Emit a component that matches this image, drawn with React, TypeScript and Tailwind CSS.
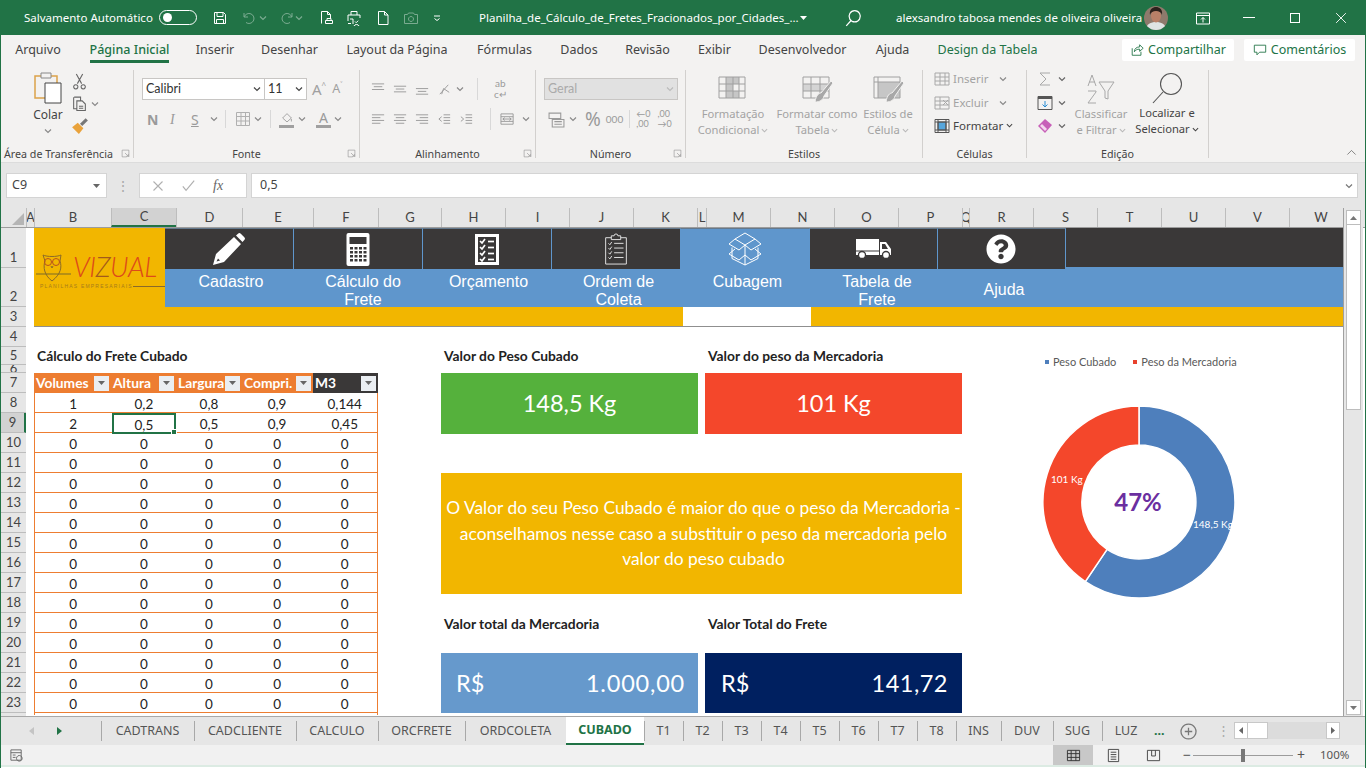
import { ReactNode } from "react";
import { FaQuestionCircle } from "react-icons/fa";

const ui = "font-['Noto_Sans',sans-serif]";
const cell = "font-['Lato',sans-serif]";
const off = "#a8a8a8";

const Chev = ({ color = "#8a8a8a", s = 8 }: { color?: string; s?: number }) => (
  <svg width={s} height={s} viewBox="0 0 8 8" fill="none" stroke={color} strokeWidth="1.2">
    <path d="M1 2.5 4 5.5 7 2.5" />
  </svg>
);

// generic 16px stroke icon for the ribbon
const Ico = ({ d, c = off, s = 16, w = 1 }: { d: string; c?: string; s?: number; w?: number }) => (
  <svg width={s} height={s} viewBox="0 0 16 16" fill="none" stroke={c} strokeWidth={w}>
    <path d={d} />
  </svg>
);

const TitleBar = () => (
  <div className={`${ui} flex items-center h-[35px] bg-[#217346] text-white text-[11.5px] whitespace-nowrap`}>
    <span className="ml-[24px] w-[135px]">Salvamento Automático</span>
    <div className="w-[38px] h-[15px] rounded-full border border-white flex items-center px-[3px]">
      <div className="w-[9px] h-[9px] rounded-full bg-white" />
    </div>
    <div className="ml-[15px] w-[20px]"><Ico c="#fff" d="M2.5 2.5h9l2 2v9h-11zM5 2.5v4h6v-4M4.5 13.5v-4h7v4" /></div>
    <div className="ml-[9px] w-[16px] opacity-40"><Ico c="#fff" d="M3 3v4h4M3.2 7A5 5 0 1 1 5 12.5" /></div>
    <div className="ml-[2px] w-[8px] opacity-40"><Chev color="#fff" /></div>
    <div className="ml-[12px] w-[16px] opacity-40"><Ico c="#fff" d="M13 3v4H9M12.8 7A5 5 0 1 0 11 12.5" /></div>
    <div className="ml-[0px] w-[8px] opacity-40"><Chev color="#fff" /></div>
    <div className="ml-[15px] w-[16px]"><Ico c="#fff" d="M3.5 13.5v-12h6l3 3V8M9.5 1.5v3h3M7.5 10.5h7v3h-7zM9 10.5V8.500h4v2" /></div>
    <div className="ml-[12px] w-[16px]"><Ico c="#fff" d="M5 5V1.500h6V5M2 11V5h12v3M5 13.500H2M4 9h3v5M10.500 14.500a3 3 0 1 0 .01 0M9 11.500l1.200 1.200 2-2" /></div>
    <div className="ml-[13px] w-[16px]"><Ico c="#fff" d="M3.500 14.500v-13h6l3.500 3.500v9.500zM9.500 1.500V5H13" /></div>
    <div className="ml-[12px] w-[16px] opacity-40"><Ico c="#fff" d="M1.500 4.500h3l1-1.500h5l1 1.500h3v9h-13zM8 6.500a2.500 2.500 0 1 0 .01 0" /></div>
    <div className="ml-[14px] w-[8px]"><Ico s={8} c="#fff" w={2} d="M2 4h12M3 9l5 4 5-4" /></div>
    <span className="ml-[38px] w-[321px]">Planilha_de_Cálculo_de_Fretes_Fracionados_por_Cidades_...</span>
    <div className="w-[8px] flex"><svg width="7" height="4" viewBox="0 0 7 4"><path d="M0 0h7L3.500 4z" fill="#fff" /></svg></div>
    <div className="ml-[36px] w-[20px]"><Ico s={18} c="#fff" w={1.1} d="M9.500 1.500a5 5 0 1 0 .01 0M6.500 10 2 15" /></div>
    <span className="ml-[32px] w-[240px]">alexsandro tabosa mendes de oliveira oliveira</span>
    <svg className="ml-[8px]" width="24" height="24" viewBox="0 0 24 24">
      <clipPath id="av"><circle cx="12" cy="12" r="12" /></clipPath>
      <g clipPath="url(#av)">
        <rect width="24" height="24" fill="#8e7a6c" />
        <path d="M2 24c0-6 5-8 10-8s10 2 10 8z" fill="#dfe4e4" />
        <ellipse cx="12" cy="10" rx="5" ry="6.500" fill="#b98068" />
        <path d="M6 9c-1-6 3-8 6-8s7 2 6 8c-1-3-3-4-6-4S7 6 6 9z" fill="#2c211c" />
      </g>
    </svg>
    <div className="ml-[27px] w-[16px]"><Ico c="#fff" d="M1.500 3h13v11h-13zM1.500 5.500h13M8 12.500V7.500M6 9.500l2-2 2 2" /></div>
    <div className="ml-[32px] w-[12px] h-px bg-white" />
    <div className="ml-[35px] w-[10px] h-[10px] border border-white" />
    <div className="ml-[35px]"><Ico s={12} c="#fff" w={1.200} d="M1.500 1.500l13 13M14.500 1.500l-13 13" /></div>
  </div>
);

const tabs = [
  { label: "Arquivo", cls: "ml-[14px] w-[46px]" },
  { label: "Página Inicial", cls: "ml-[29px] w-[79px] font-medium text-[#217346] border-b-[3px] border-[#217346]" },
  { label: "Inserir", cls: "ml-[28px] w-[36px]" },
  { label: "Desenhar", cls: "ml-[29px] w-[55px]" },
  { label: "Layout da Página", cls: "ml-[30px] w-[100px]" },
  { label: "Fórmulas", cls: "ml-[31px] w-[53px]" },
  { label: "Dados", cls: "ml-[29px] w-[38px]" },
  { label: "Revisão", cls: "ml-[27px] w-[45px]" },
  { label: "Exibir", cls: "ml-[28px] w-[33px]" },
  { label: "Desenvolvedor", cls: "ml-[28px] w-[87px]" },
  { label: "Ajuda", cls: "ml-[30px] w-[33px]" },
  { label: "Design da Tabela", cls: "ml-[28px] w-[101px] text-[#217346]" },
];

const TabsRow = () => (
  <div className={`${ui} flex items-start h-[31px] bg-[#f3f2f1] text-[12.5px] text-[#444] whitespace-nowrap`}>
    {tabs.map((t) => (
      <div key={t.label} className={`${t.cls} flex justify-center h-[28px] pt-[6px]`}>{t.label}</div>
    ))}
    <div className="ml-[84px] mt-[4px] w-[112px] h-[22px] bg-white rounded-[2px] flex items-center justify-center gap-[4px] text-[12.5px] text-[#217346]">
      <Ico s={14} c="#217346" d="M2.500 6v8h10v-4M5 10c0-4 3-5.500 6-5.500V2l4 4-4 3.500V7C8 7 6.500 8 5 10z" /> Compartilhar
    </div>
    <div className="ml-[10px] mt-[4px] w-[111px] h-[22px] bg-white rounded-[2px] flex items-center justify-center gap-[4px] text-[12.5px] text-[#217346]">
      <Ico s={14} c="#217346" d="M1.500 2.500h13v8h-7l-3 3v-3h-3z" /> Comentários
    </div>
  </div>
);

const Group = ({ w, label, launcher = true, labelCls = "justify-center", children }: { w: string; label: string; launcher?: boolean; labelCls?: string; children: ReactNode }) => (
  <>
    <div className={`${w} h-[96px] flex flex-col shrink-0`}>
      <div className="h-[78px]">{children}</div>
      <div className={`${labelCls} relative h-[18px] pt-[2px] flex items-center text-[10.7px] text-[#444] whitespace-nowrap`}>
        {label}
        {launcher && (
          <div className="absolute right-[3px] top-[5px]">
            <Ico s={9} c="#8a8a8a" d="M2 2h12v12M2 2v12h8M7 7l6 6M9 13h4V9" />
          </div>
        )}
      </div>
    </div>
    <div className="w-px h-[88px] mt-[4px] bg-[#d2d0ce] shrink-0" />
  </>
);

const Lines = ({ d }: { d: string }) => <Ico s={15} d={d} c="#9a9a9a" />;

const Clipboard = () => (
  <Group w="w-[132px]" label="Área de Transferência" labelCls="justify-start pl-[3px]">
    <div className="flex">
      <div className="ml-[31px] w-[32px] flex flex-col items-center pt-[6px]">
        <svg width="28" height="32" viewBox="0 0 28 32" fill="none">
          <path d="M1 4h22v22H1z" stroke="#dca24a" strokeWidth="1.500" />
          <path d="M7 1h10v5H7z" fill="#f3f2f1" stroke="#888" />
          <path d="M11 11h16v20H11z" fill="#fff" stroke="#444" />
        </svg>
        <span className="text-[12px] text-[#444] mt-[2px]">Colar</span>
        <div className="mt-[3px]"><Chev /></div>
      </div>
      <div className="ml-[7px] flex flex-col items-start pt-[7px] gap-[5px]">
        <Ico s={17} c="#666" d="M5 1l5 9M11 1 6 10M4.500 11a2 2 0 1 0 .01 0M11.500 11a2 2 0 1 0 .01 0" />
        <div className="flex items-center gap-[3px]">
          <Ico s={17} c="#666" d="M3 2h6v3M2.500 2v11H5M5.500 5.500h5l3 3v6h-8zM7.500 10.500h4M7.500 12.500h4" />
          <Chev />
        </div>
        <svg width="18" height="18" viewBox="0 0 16 16"><path d="M1 9l5-4 5 5-4 5z" fill="#e9a23b" /><path d="M8 6l5-5 2 2-5 5z" fill="#777" /></svg>
      </div>
    </div>
  </Group>
);

const Font = () => (
  <Group w="w-[225px]" label="Fonte">
    <div className="pl-[8px] pt-[12px]">
      <div className="flex items-center h-[22px]">
        <div className={`${cell} w-[123px] h-[22px] bg-white border border-[#c8c6c4] flex items-center justify-between px-[3px] text-[12.5px] text-[#333]`}>
          Calibri <Chev color="#444" />
        </div>
        <div className={`${cell} w-[42px] h-[22px] bg-white border border-[#c8c6c4] border-l-0 flex items-center justify-between px-[3px] text-[12.5px] text-[#333]`}>
          11 <Chev color="#444" />
        </div>
        <span className="ml-[5px] text-[15px] text-[#a0a0a0]">A</span><span className="text-[8px] text-[#a0a0a0] mb-[8px]">^</span>
        <span className="ml-[6px] text-[12.5px] text-[#a0a0a0]">A</span><span className="text-[8px] text-[#a0a0a0] mb-[8px]">˅</span>
      </div>
      <div className="flex items-center h-[22px] mt-[8px] text-[#9a9a9a] text-[14px]">
        <span className="ml-[5px] w-[12px] font-bold">N</span>
        <span className="ml-[11px] w-[10px] italic font-['Liberation_Serif',serif]">I</span>
        <span className="ml-[11px] w-[10px] underline">S</span>
        <div className="ml-[9px] w-[10px]"><Chev /></div>
        <div className="ml-[5px] h-[18px] w-px bg-[#d8d8d8]" />
        <div className="ml-[9px] w-[17px]"><Ico d="M1.500 1.500h13v13h-13zM1.500 5.500h13M1.500 10h13M6 1.500v13M10.500 1.500v13" c="#b0b0b0" /></div>
        <div className="ml-[2px] w-[10px]"><Chev /></div>
        <div className="ml-[6px] h-[18px] w-px bg-[#d8d8d8]" />
        <div className="ml-[7px] w-[17px] flex flex-col items-center">
          <Ico s={14} d="M3 8l5-5 5 5-5 4.500zM13 9v3" c="#9a9a9a" />
          <div className="w-[15px] h-[3px] bg-[#a0a0a0]" />
        </div>
        <div className="ml-[3px] w-[10px]"><Chev /></div>
        <div className="ml-[7px] w-[17px] flex flex-col items-center leading-[14px]">
          <span className="text-[14px]">A</span>
          <div className="w-[15px] h-[3px] bg-[#a0a0a0]" />
        </div>
        <div className="ml-[2px] w-[10px]"><Chev /></div>
      </div>
    </div>
  </Group>
);

const Align = () => (
  <Group w="w-[175px]" label="Alinhamento">
    <div className="pl-[11px] pt-[12px]">
      <div className="flex items-center h-[22px] gap-[7px]">
        <Lines d="M1 2h13M3 5h9M1 8h13" />
        <Lines d="M1 4.500h13M3 7.500h9M1 10.500h13" />
        <Lines d="M1 7h13M3 10h9M1 13h13" />
        <Lines d="M3 13 12 3M5 13l2-6 6 4" />
        <div className="-ml-[3px]"><Chev /></div>
        <div className="ml-[6px] h-[22px] w-px bg-[#d8d8d8]" />
        <div className={`${cell} ml-[9px] text-[10px] leading-[11px] text-[#9a9a9a] text-center`}>ab<br />c↵</div>
      </div>
      <div className="flex items-center h-[22px] mt-[8px] gap-[7px]">
        <Lines d="M1 3h13M1 6h9M1 9h13M1 12h9" />
        <Lines d="M1 3h13M3 6h9M1 9h13M3 12h9" />
        <Lines d="M1 3h13M5 6h9M1 9h13M5 12h9" />
        <Lines d="M7 3h7M7 6h7M7 9h7M7 12h7M5 5 2 7.500 5 10" />
        <Lines d="M7 3h7M7 6h7M7 9h7M7 12h7M2 5l3 2.500L2 10" />
        <div className="ml-[9px] h-[22px] w-px bg-[#d8d8d8]" />
        <div className="ml-[2px]"><Lines d="M1 2h13v11H1zM1 5h13M1 10h13M3 7.500h9M5 6l-2 1.500L5 9M10 6l2 1.500L10 9" /></div>
        <Chev />
      </div>
    </div>
  </Group>
);

const Numero = () => (
  <Group w="w-[149px]" label="Número">
    <div className="pl-[8px] pt-[12px]">
      <div className={`${cell} w-[134px] h-[22px] bg-[#e1e1e1] border border-[#c8c6c4] flex items-center justify-between px-[3px] text-[12.5px] text-[#aaa]`}>
        Geral <Chev color="#bbb" />
      </div>
      <div className="flex items-center h-[22px] mt-[8px] text-[#9a9a9a]">
        <div className="ml-[4px]"><Ico s={17} c="#9a9a9a" d="M1 2h11v5H1zM4 8h11v7H4zM6 10h7M6 12.500h7" /></div>
        <div className="ml-[4px]"><Chev /></div>
        <span className="ml-[8px] text-[19px] leading-[22px]">%</span>
        <span className={`${cell} ml-[5px] text-[10px]`}>000</span>
        <div className="ml-[6px] h-[18px] w-px bg-[#d8d8d8]" />
        <span className={`${cell} ml-[6px] text-[9px] leading-[10px]`}>←0<br />,00</span>
        <span className={`${cell} ml-[7px] text-[9px] leading-[10px]`}>,00<br />→0</span>
      </div>
    </div>
  </Group>
);

const brush = <path d="M29 5 19 17c-2 0-5 2-6 9 5 0 8-2 9-6L31 7z" fill="#a8a8a8" stroke="#f3f2f1" />;

const BigStyle = ({ l1, l2, w, ml, grid }: { l1: string; l2: string; w: string; ml: string; grid: ReactNode }) => (
  <div className={`${w} ${ml} flex flex-col items-center pt-[10px] text-[11.2px] leading-[16px] text-[#a3a3a3] whitespace-nowrap`}>
    <svg width="31" height="27" viewBox="0 0 31 27" fill="none" stroke="#a0a0a0">{grid}</svg>
    <span className="mt-[3px]">{l1}</span>
    <span className="flex items-center gap-[2px]">{l2} <Chev color="#b8b8b8" s={7} /></span>
  </div>
);

const Estilos = () => (
  <Group w="w-[236px]" label="Estilos" launcher={false}>
    <div className="flex">
      <BigStyle ml="ml-[9px]" w="w-[76px]" l1="Formatação" l2="Condicional" grid={<><path d="M8 1h13v7H8zM8 8h7v7H8zM8 15h13v7H8z" fill="#c6c6c6" stroke="none" /><path d="M1 1h26v21H1zM1 8h26M1 15h26M8 1v21M15 1v21M21 1v21" /></>} />
      <BigStyle ml="ml-[0px]" w="w-[92px]" l1="Formatar como" l2="Tabela" grid={<><path d="M1 8h26v7H1z" fill="#d4d4d4" stroke="none" /><path d="M1 1h26v21H1zM1 8h26M1 15h26M9 1v21M18 1v21" />{brush}</>} />
      <BigStyle ml="ml-[0px]" w="w-[50px]" l1="Estilos de" l2="Célula" grid={<><path d="M5 6h22v16H5z" fill="#c6c6c6" stroke="none" /><path d="M1 1h26v21H1zM1 6h26M5 1v21" />{brush}</>} />
    </div>
  </Group>
);

const Celulas = () => (
  <Group w="w-[103px]" label="Células" launcher={false}>
    <div className="pl-[11px] pt-[1px] text-[11.5px] leading-[16px] whitespace-nowrap">
      <div className="flex items-center h-[24px] text-[#a3a3a3] gap-[3px]">
        <Ico s={16} d="M1 2h14v12H1zM1 6h14M1 10h14M6 2v12M11 2v12" /> Inserir <span className="ml-[8px]"><Chev /></span>
      </div>
      <div className="flex items-center h-[23px] text-[#a3a3a3] gap-[3px]">
        <Ico s={16} d="M1 2h14v12H1zM1 6h14M1 10h14M6 2v12M9 5l5 5M14 5l-5 5" /> Excluir <span className="ml-[7px]"><Chev /></span>
      </div>
      <div className="flex items-center h-[23px] text-[#444] gap-[3px]">
        <svg width="16" height="16" viewBox="0 0 16 16" fill="none" stroke="#555"><path d="M4 4h8v8H4z" fill="#56a6dc" /><path d="M1 1.500h14v13H1zM1 4h14M1 12h14M4 1v14M12 1v14" /></svg>
        Formatar <Chev color="#444" s={7} />
      </div>
    </div>
  </Group>
);

const Edicao = () => (
  <Group w="w-[181px]" label="Edição" launcher={false}>
    <div className="flex">
      <div className="ml-[10px] w-[31px] pt-[1px] flex flex-col">
        <div className="flex items-center h-[24px] gap-[5px]"><Ico s={16} d="M13 2H3l6 6-6 6h10" /><Chev color="#666" /></div>
        <div className="flex items-center h-[23px] gap-[5px]">
          <svg width="16" height="16" viewBox="0 0 16 16" fill="none"><path d="M1 1.500h14v13H1z" stroke="#555" /><path d="M1 3h14" stroke="#555" strokeWidth="2" /><path d="M8 6v6M5.500 9.500 8 12l2.500-2.500" stroke="#2a8dd4" /></svg>
          <Chev color="#666" />
        </div>
        <div className="flex items-center h-[23px] gap-[5px]">
          <svg width="16" height="16" viewBox="0 0 16 16"><path d="M1 8l7-7 7 6-7 8z" fill="#c760b8" /><path d="M3 8l5 5 2-2-5-5z" fill="#f4d6ee" /></svg>
          <Chev color="#666" />
        </div>
      </div>
      <div className="w-[66px] flex flex-col items-center pt-[7px] text-[11.2px] leading-[16px] text-[#a3a3a3] whitespace-nowrap">
        <svg width="30" height="32" viewBox="0 0 30 32" fill="none" stroke="#a8a8a8"><path d="M2 13 6 2l4 11M3 9h6M2 18h8v1l-8 11h8M13 9h15l-6 9v8l-3-1v-7z" /></svg>
        <span className="mt-[1px]">Classificar</span>
        <span className="flex items-center gap-[2px]">e Filtrar <Chev color="#b8b8b8" s={7} /></span>
      </div>
      <div className="w-[66px] flex flex-col items-center pt-[6px] text-[11.2px] leading-[16px] text-[#444] whitespace-nowrap">
        <svg width="33" height="33" viewBox="0 0 33 33" fill="none" stroke="#555" strokeWidth="1.100"><circle cx="20" cy="12" r="10.500" /><path d="M12 20 2 31" /></svg>
        <span>Localizar e</span>
        <span className="flex items-center gap-[2px]">Selecionar <Chev color="#444" s={7} /></span>
      </div>
    </div>
  </Group>
);

const Ribbon = () => (
  <div className={`${ui} relative flex h-[96px] bg-[#f3f2f1]`}>
    <Clipboard />
    <Font />
    <Align />
    <Numero />
    <Estilos />
    <Celulas />
    <Edicao />
    <div className="absolute right-[8px] bottom-[4px]"><Ico s={11} c="#555" d="M2 11 8 5l6 6" /></div>
  </div>
);

const FormulaBar = () => (
  <div className={`${ui} flex h-[46px] pt-[10px] bg-[#e6e6e6] text-[12.5px] text-[#444] border-t border-[#dcdcdc]`}>
    <div className="ml-[5px] w-[101px] h-[25px] bg-white border border-[#d4d4d4] flex items-center justify-between pl-[5px] pr-[6px]">
      C9
      <svg width="7" height="4" viewBox="0 0 7 4"><path d="M0 0h7L3.500 4z" fill="#666" /></svg>
    </div>
    <div className="w-[32px] flex justify-center items-center text-[#aaa] text-[14px] h-[25px]">⋮</div>
    <div className="w-[108px] h-[25px] bg-white border border-[#d4d4d4] flex items-center pl-[12px] gap-[18px]">
      <Ico s={12} c="#b0b0b0" w={1.500} d="M2 2l12 12M14 2 2 14" />
      <Ico s={13} c="#b0b0b0" w={1.500} d="M1 9l4 5L15 2" />
      <span className="italic font-['Liberation_Serif',serif] text-[14px] text-[#666]">fx</span>
    </div>
    <div className="ml-[4px] w-[1107px] h-[25px] bg-white border border-[#d4d4d4] flex items-center justify-between pl-[8px] pr-[4px]">
      0,5
      <Chev color="#777" />
    </div>
  </div>
);

const columns = [
  { n: "A", w: "w-[8px]" }, { n: "B", w: "w-[77px]" }, { n: "C", w: "w-[65px]", sel: true }, { n: "D", w: "w-[66px]" },
  { n: "E", w: "w-[71px]" }, { n: "F", w: "w-[65px]" }, { n: "G", w: "w-[63px]" }, { n: "H", w: "w-[64px]" },
  { n: "I", w: "w-[64px]" }, { n: "J", w: "w-[64px]" }, { n: "K", w: "w-[64px]" }, { n: "L", w: "w-[9px]" },
  { n: "M", w: "w-[64px]" }, { n: "N", w: "w-[64px]" }, { n: "O", w: "w-[64px]" }, { n: "P", w: "w-[64px]" },
  { n: "Q", w: "w-[7px]" }, { n: "R", w: "w-[64px]" }, { n: "S", w: "w-[64px]" }, { n: "T", w: "w-[64px]" },
  { n: "U", w: "w-[64px]" }, { n: "V", w: "w-[64px]" }, { n: "W", w: "w-[63px]" },
];

const ColumnHeader = () => (
  <div className={`${cell} flex h-[20px] bg-[#e6e6e6] text-[13px] text-[#444] border-b border-[#9c9c9c]`}>
    <div className="w-[25px] flex items-end justify-end pr-[2px] pb-[2px]">
      <svg width="12" height="12" viewBox="0 0 12 12"><path d="M12 0v12H0z" fill="#b5b5b5" /></svg>
    </div>
    {columns.map((c) => (
      <div
        key={c.n}
        className={`${c.w} shrink-0 flex items-center justify-center overflow-hidden border-l border-[#bdbdbd] ${c.sel ? "bg-[#d2d2d2] border-b-2 border-b-[#217346]" : ""}`}
      >
        {c.n}
      </div>
    ))}
  </div>
);

const rowHeads = [
  { n: "1", h: "h-[40px]", low: true }, { n: "2", h: "h-[39px]", low: true }, { n: "3", h: "h-[20px]" }, { n: "4", h: "h-[20px]" },
  { n: "5", h: "h-[18px]" }, { n: "6", h: "h-[8px]" }, { n: "7", h: "h-[20px]" }, { n: "8", h: "h-[20px]" },
  { n: "9", h: "h-[20px]", sel: true }, ...Array.from({ length: 15 }, (_, i) => ({ n: String(i + 10), h: "h-[20px]" })),
];

const RowHeader = () => (
  <div className={`${cell} w-[25px] h-[488px] overflow-hidden bg-[#e6e6e6] text-[13px] text-[#444] shrink-0`}>
    {rowHeads.map((r) => (
      <div
        key={r.n}
        className={`${r.h} flex ${"low" in r ? "items-end" : "items-center pt-[1px]"} justify-center overflow-hidden border-b border-[#bdbdbd] ${"sel" in r ? "bg-[#d2d2d2] border-r-2 border-r-[#217346]" : ""}`}
      >
        {r.n}
      </div>
    ))}
  </div>
);

const Pencil = () => (
  <svg width="32" height="32" viewBox="0 0 32 32" fill="#fff">
    <path d="M0 32 3 21 21 4 28 11 11 29zM3.500 28.500 7 27.500 5 25.500z" fillRule="evenodd" />
    <path d="M23 2.500 25 .7a2 2 0 0 1 2.800 0l3.500 3.500a2 2 0 0 1 0 2.800L29.500 9z" />
  </svg>
);

const Calc = () => (
  <svg width="24" height="33" viewBox="0 0 24 33">
    <rect x="0.500" width="23" height="33" rx="2" fill="#fff" />
    <rect x="3.500" y="4" width="17" height="7" fill="#3a3838" />
    {[14, 18, 22, 26].flatMap((y) =>
      [4, 8.500, 13, 17.500].map((x) => <rect key={`${x}-${y}`} x={x} y={y} width="3" height="2.500" fill="#3a3838" />),
    )}
  </svg>
);

const Checks = () => (
  <svg width="24" height="31" viewBox="0 0 24 31" fill="none">
    <rect x="1.500" y="1.500" width="21" height="28" stroke="#fff" strokeWidth="3" />
    {[7, 13, 19, 25].map((y) => (
      <g key={y} stroke="#fff" strokeWidth="1.700">
        <path d={`M5 ${y}l2 2 3-4`} />
        <path d={`M13 ${y + 0.5}h6`} />
      </g>
    ))}
  </svg>
);

const ClipList = () => (
  <svg width="24" height="32" viewBox="0 0 24 34" fill="none" stroke="#e8e8e8">
    <path d="M7 5H1v28h22V5h-6" />
    <path d="M7 7V3h3a2 2 0 0 1 4 0h3v4z" />
    {[11, 16, 21, 26].map((y) => (
      <g key={y}>
        <path d={`M4 ${y}l1.500 1.500 2-3`} />
        <path d={`M10 ${y}h10`} />
      </g>
    ))}
  </svg>
);

const BoxIcon = () => (
  <svg width="34" height="34" viewBox="0 0 34 34" fill="none" stroke="#fff">
    <path d="M17 1 7 7l10 6 10-6zM7 7 1 12l10 6 6-5 6 5 10-6-6-5M4 15.500v11L17 33l13-6.500v-11M17 13v20" />
    <path d="M7 17 1 22l10 6 6-5M27 17l6 5-10 6-6-5" />
  </svg>
);

const TruckIcon = () => (
  <svg width="36" height="20" viewBox="0 0 36 20" fill="#fff">
    <rect x="0" y="0" width="23" height="11.500" />
    <rect x="0" y="12.500" width="23" height="3.500" />
    <path d="M24 3h6l5 7v6H24zM26 5v5h6l-3-5z" fillRule="evenodd" />
    <circle cx="6" cy="16" r="3.500" stroke="#3a3838" strokeWidth="1.300" />
    <circle cx="30" cy="16" r="3.500" stroke="#3a3838" strokeWidth="1.300" />
  </svg>
);

const navItems = [
  { label: ["Cadastro"], icon: <Pencil />, iconCls: "w-[129px]", textCls: "pl-[3px] pt-[4px]" },
  { label: ["Cálculo do", "Frete"], icon: <Calc />, iconCls: "w-[129px]", textCls: "pl-[9px] pt-[4px]" },
  { label: ["Orçamento"], icon: <Checks />, iconCls: "w-[129px]", textCls: "pl-[2px] pt-[4px]" },
  { label: ["Ordem de", "Coleta"], icon: <ClipList />, iconCls: "w-[129px]", textCls: "pl-[4px] pt-[4px]" },
  { label: ["Cubagem"], icon: <BoxIcon />, iconCls: "w-[129px] bg-[#5f96cc]", textCls: "pl-[4px] pt-[4px]" },
  { label: ["Tabela de", "Frete"], icon: <TruckIcon />, iconCls: "w-[128px]", textCls: "pl-[6px] pt-[4px]" },
  { label: ["Ajuda"], icon: <FaQuestionCircle className="text-white text-[30px] -ml-[2px]" />, iconCls: "w-[128px]", textCls: "pl-[4px] pt-[12px]" },
];

const Logo = () => (
  <div className="w-[131px] h-[79px] shrink-0 flex flex-col pl-[2px] pt-[25px]">
    <div className="flex h-[30px]">
      <svg width="36" height="30" viewBox="0 0 36 30" fill="none" stroke="#8a6a2a" strokeWidth="1">
        <path d="M7 2c4 2 14 2 18 0l-1 6c2 6 1 13-8 20C8 22 7 14 9 8z" />
        <circle cx="12" cy="9" r="3.500" stroke="#b8501f" />
        <circle cx="20" cy="9" r="3.500" stroke="#b8501f" />
        <path d="M15 13l1 2 1-2" />
        <path d="M0 21h35" stroke="#7a6a28" />
      </svg>
      <span className="font-['Lato',sans-serif] italic font-light text-[27.500px] leading-[28px] text-[#dd4a1a] ml-[1px] tracking-[-0.5px] whitespace-nowrap">
        VI<span className="text-[#a35a1b]">Z</span>UAL
      </span>
    </div>
    <div className="flex items-center pl-[4px] h-[6px]">
      <span className="font-['Liberation_Sans',sans-serif] text-[5px] tracking-[1.200px] text-[#a67c1c] leading-[6px] whitespace-nowrap">
        PLANILHAS EMPRESARIAIS
      </span>
      <div className="flex-1 h-px mx-[0px] bg-[#8a6a2a]" />
    </div>
  </div>
);

const Banner = () => (
  <div className="h-[99px] ml-[8px] border-b border-[#8f8f8f] flex flex-col">
    <div className="flex h-[79px] bg-[#f2b600]">
      <Logo />
      {navItems.map((n) => (
        <div key={n.label[0]} className="flex flex-col h-[79px]">
          <div className={`${n.iconCls} h-[41px] bg-[#3a3838] border-r border-t border-[#5f96cc] border-t-[#64788c] flex items-center justify-center`}>{n.icon}</div>
          <div className={`${n.textCls} flex-1 bg-[#5f96cc] text-center text-white font-['Liberation_Sans',sans-serif] text-[16px] leading-[18px] overflow-hidden`}>
            {n.label.map((l) => <div key={l}>{l}</div>)}
          </div>
        </div>
      ))}
      <div className="flex-1 flex flex-col">
        <div className="h-[39px] bg-[#3a3838]" />
        <div className="flex-1 bg-[#5f96cc]" />
      </div>
    </div>
    <div className="flex flex-1 bg-[#f2b600]">
      <div className="w-[649px]" />
      <div className="w-[128px] bg-white" />
    </div>
  </div>
);

const tableCols = ["w-[77px]", "w-[65px]", "w-[66px]", "w-[71px]", "w-[65px]"];
const heads = ["Volumes", "Altura", "Largura", "Compri.", "M3"];
const tableRows = [
  ["1", "0,2", "0,8", "0,9", "0,144"],
  ["2", "0,5", "0,5", "0,9", "0,45"],
  ...Array.from({ length: 14 }, () => ["0", "0", "0", "0", "0"]),
];

const FilterBtn = () => (
  <div className="w-[15px] h-[15px] bg-[#eaeef2] flex items-center justify-center shrink-0">
    <svg width="7" height="4" viewBox="0 0 7 4"><path d="M0 0h7L3.500 4z" fill="#666" /></svg>
  </div>
);

const FreightTable = () => (
  <div className={`${cell} w-[344px] shrink-0 ml-[8px] pt-[20px]`}>
    <div className="h-[26px] pl-[3px] text-[13.800px] font-bold text-[#222] leading-[18px]">Cálculo do Frete Cubado</div>
    <div className="flex h-[20px] text-white text-[13.800px] font-bold">
      {heads.map((h, i) => (
        <div
          key={h}
          className={`${tableCols[i]} flex items-center justify-between pl-[2px] pr-[2px] ${h === "M3" ? "bg-[#3a3838]" : "bg-[#ed7d31]"} whitespace-nowrap overflow-hidden`}
        >
          {h}
          <FilterBtn />
        </div>
      ))}
    </div>
    {tableRows.map((r, ri) => (
      <div key={ri} className="flex h-[20px] border-b border-x border-[#ed7d31] text-[13.500px] text-[#222]">
        {r.map((v, ci) => (
          <div
            key={ci}
            className={`${tableCols[ci]} relative flex items-center justify-center pt-[4px] ${ri === 1 && ci === 1 ? "border-2 border-[#217346] h-[21px]" : ""}`}
          >
            {v}
            {ri === 1 && ci === 1 && <div className="absolute -right-[3px] -bottom-[3px] w-[6px] h-[6px] bg-[#217346] border border-white" />}
          </div>
        ))}
      </div>
    ))}
    <div className="h-[2px] border-x border-[#ed7d31]" />
  </div>
);

const Panels = () => (
  <div className={`${cell} w-[521px] shrink-0 ml-[63px] pt-[20px] text-[#222]`}>
    <div className="flex h-[26px] text-[13.800px] font-bold leading-[18px]">
      <div className="w-[264px] pl-[3px]">Valor do Peso Cubado</div>
      <div className="pl-[3px]">Valor do peso da Mercadoria</div>
    </div>
    <div className="flex gap-[7px] h-[61px] text-white text-[23.500px]">
      <div className="w-[257px] bg-[#55b13c] flex items-center justify-center pt-[1px]">148,5 Kg</div>
      <div className="w-[257px] bg-[#f4472b] flex items-center justify-center pt-[1px]">101 Kg</div>
    </div>
    <div className="mt-[39px] h-[121px] bg-[#f2b600] flex items-center justify-center text-center text-white text-[17.400px] leading-[25.500px] whitespace-nowrap">
      <div className="pl-[4px]">
        O Valor do seu Peso Cubado é maior do que o peso da Mercadoria -<br />
        aconselhamos nesse caso a substituir o peso da mercadoria pelo<br />
        valor do peso cubado
      </div>
    </div>
    <div className="flex h-[59px] pt-[21px] text-[13.800px] font-bold leading-[18px]">
      <div className="w-[264px] pl-[3px]">Valor total da Mercadoria</div>
      <div className="pl-[3px]">Valor Total do Frete</div>
    </div>
    <div className="flex gap-[7px] h-[60px] text-white text-[23.500px]">
      <div className="w-[257px] bg-[#6699cc] flex items-center justify-between pl-[15px] pr-[13px] pt-[2px]"><span>R$</span><span className="tracking-[0.8px]">1.000,00</span></div>
      <div className="w-[257px] bg-[#002060] flex items-center justify-between pl-[16px] pr-[14px] pt-[2px]"><span>R$</span><span className="tracking-[0.5px]">141,72</span></div>
    </div>
  </div>
);

const Donut = () => (
  <div className={`${cell} ml-[70px] pt-[27px] text-[#595959]`}>
    <div className="flex items-center h-[16px] text-[11px] whitespace-nowrap">
      <div className="ml-[13px] w-[4px] h-[4px] bg-[#4e7fbc]" />
      <span className="ml-[4px]">Peso Cubado</span>
      <div className="ml-[17px] w-[4px] h-[4px] bg-[#e8412c]" />
      <span className="ml-[4px]">Peso da Mercadoria</span>
    </div>
    <svg className="mt-[32px]" width="230" height="210" viewBox="0 0 230 210">
      {/* centre 107,100 = 1139,502 on the page */}
      <path d="M107 4A96 96 0 1 1 53.300 179.600L75.100 147.300A57 57 0 1 0 107 43Z" fill="#4e7fbc" stroke="#fff" strokeWidth="1.500" />
      <path d="M107 4A96 96 0 0 0 53.300 179.600L75.100 147.300A57 57 0 0 1 107 43Z" fill="#f4472b" stroke="#fff" strokeWidth="1.500" />
      <text x="106" y="109" textAnchor="middle" fontSize="24" fontWeight="700" fill="#6b2fa0">47%</text>
      <text x="161" y="126" fontSize="10" fill="#fff">148,5 Kg</text>
      <text x="19" y="81" fontSize="10" fill="#fff">101 Kg</text>
    </svg>
  </div>
);

const Scrollbar = () => (
  <div className="w-[20px] h-[508px] -mt-[20px] shrink-0 bg-[#e6e6e6] border-l border-[#a0a0a0] flex flex-col items-center relative">
    <div className="w-[15px] h-[15px] mt-[2px] bg-white border border-[#bdbdbd] flex items-center justify-center">
      <svg width="7" height="4" viewBox="0 0 7 4"><path d="M0 4h7L3.500 0z" fill="#777" /></svg>
    </div>
    <div className="w-[15px] h-[185px] bg-white border border-[#bdbdbd] border-t-0" />
    <div className="mt-auto w-[15px] h-[15px] mb-[1px] bg-white border border-[#bdbdbd] flex items-center justify-center">
      <svg width="7" height="4" viewBox="0 0 7 4"><path d="M0 0h7L3.500 4z" fill="#777" /></svg>
    </div>
  </div>
);

const sheetTabs = [
  { n: "CADTRANS", w: "w-[93px]" }, { n: "CADCLIENTE", w: "w-[102px]" }, { n: "CALCULO", w: "w-[82px]" },
  { n: "ORCFRETE", w: "w-[87px]" }, { n: "ORDCOLETA", w: "w-[101px]" }, { n: "CUBADO", w: "w-[78px]", on: true },
  { n: "T1", w: "w-[39px]" }, { n: "T2", w: "w-[39px]" }, { n: "T3", w: "w-[39px]" }, { n: "T4", w: "w-[39px]" },
  { n: "T5", w: "w-[39px]" }, { n: "T6", w: "w-[39px]" }, { n: "T7", w: "w-[39px]" }, { n: "T8", w: "w-[39px]" },
  { n: "INS", w: "w-[45px]" }, { n: "DUV", w: "w-[52px]" }, { n: "SUG", w: "w-[49px]" }, { n: "LUZ", w: "w-[48px]" },
];

const SheetTabs = () => (
  <div className={`${ui} flex h-[29px] bg-[#e6e6e6] border-t border-[#a8a8a8] text-[12.500px] text-[#555] whitespace-nowrap`}>
    <div className="w-[100px] flex items-center">
      <svg className="ml-[28px]" width="5" height="8" viewBox="0 0 5 8"><path d="M5 0v8L0 4z" fill="#c4c4c4" /></svg>
      <svg className="ml-[23px]" width="5" height="8" viewBox="0 0 5 8"><path d="M0 0v8l5-4z" fill="#217346" /></svg>
    </div>
    {sheetTabs.map((t) =>
      t.on ? (
        <div key={t.n} className={`${t.w} flex items-center justify-center bg-white font-bold text-[#217346] border-b-2 border-[#217346]`}>{t.n}</div>
      ) : (
        <div key={t.n} className="flex items-center">
          <div className="w-px h-[20px] bg-[#a8a8a8]" />
          <div className={`${t.w} -ml-px flex items-center justify-center`}>{t.n}</div>
        </div>
      ),
    )}
    <div className="flex items-center ml-[4px] text-[#217346] font-bold w-[14px]">...</div>
    <div className="ml-[12px] flex items-center"><Ico s={17} c="#777" w={1.200} d="M8 1a7 7 0 1 0 .01 0M8 4.500v7M4.500 8h7" /></div>
    <div className="ml-[20px] flex items-center text-[#aaa]">⋮</div>
    <div className="ml-[4px] mt-[5px] w-[106px] h-[17px] bg-[#dcdcdc] flex justify-between">
      <div className="flex">
        <div className="w-[14px] h-[17px] bg-white border border-[#c8c8c8] flex items-center justify-center">
          <svg width="4" height="7" viewBox="0 0 4 7"><path d="M4 0v7L0 3.500z" fill="#666" /></svg>
        </div>
        <div className="w-[20px] h-[17px] bg-white border border-[#c8c8c8] border-l-0" />
      </div>
      <div className="w-[14px] h-[17px] bg-white border border-[#c8c8c8] flex items-center justify-center">
        <svg width="4" height="7" viewBox="0 0 4 7"><path d="M0 0v7l4-3.500z" fill="#666" /></svg>
      </div>
    </div>
  </div>
);

const StatusBar = () => (
  <div className={`${ui} flex items-center h-[22px] bg-[#f1f1f1] border-b-2 border-[#dcebe3] text-[11.500px] text-[#555]`}>
    <div className="ml-[8px]"><Ico s={15} c="#666" d="M2 2h11v11H2zM2 5h11M4 7.500h3M4 10h3M11 8a3 3 0 1 0 .01 0" /></div>
    <div className="ml-[1029px] w-[40px] h-[20px] bg-[#c8c8c8] flex items-center justify-center">
      <Ico s={15} c="#333" d="M1.500 2.500h13v11h-13zM1.500 6h13M1.500 10h13M5.500 2.500v11M10.500 2.500v11" />
    </div>
    <div className="w-[41px] flex justify-center"><Ico s={15} c="#444" d="M2.500 1.500h11v13h-11zM5 4.500h6M5 7h6M5 9.500h6M5 12h6" /></div>
    <div className="w-[39px] flex justify-center"><Ico s={15} c="#444" d="M1.500 2.500h13v11h-13zM6 2.500v6h4v-6" /></div>
    <span className="ml-[10px] w-[10px] text-[14px] leading-none">−</span>
    <div className="w-[100px] h-px bg-[#9c9c9c] flex items-center justify-center">
      <div className="w-[4px] h-[13px] bg-[#777]" />
    </div>
    <span className="ml-[4px] w-[10px] text-[14px] leading-none">+</span>
    <span className="ml-[13px]">100%</span>
  </div>
);

export default function App() {
  return (
    <div className="w-[1366px] h-[768px] overflow-hidden bg-white flex flex-col">
      <TitleBar />
      <div className="flex-1 flex flex-col border-x border-[#217346] min-h-0">
        <TabsRow />
        <Ribbon />
        <FormulaBar />
        <ColumnHeader />
        <div className="flex h-[488px]">
          <RowHeader />
          <div className="w-[1317px] h-[488px] overflow-hidden bg-white shrink-0">
            <Banner />
            <div className="flex items-start">
              <FreightTable />
              <Panels />
              <Donut />
            </div>
          </div>
          <Scrollbar />
        </div>
        <SheetTabs />
        <StatusBar />
      </div>
    </div>
  );
}
